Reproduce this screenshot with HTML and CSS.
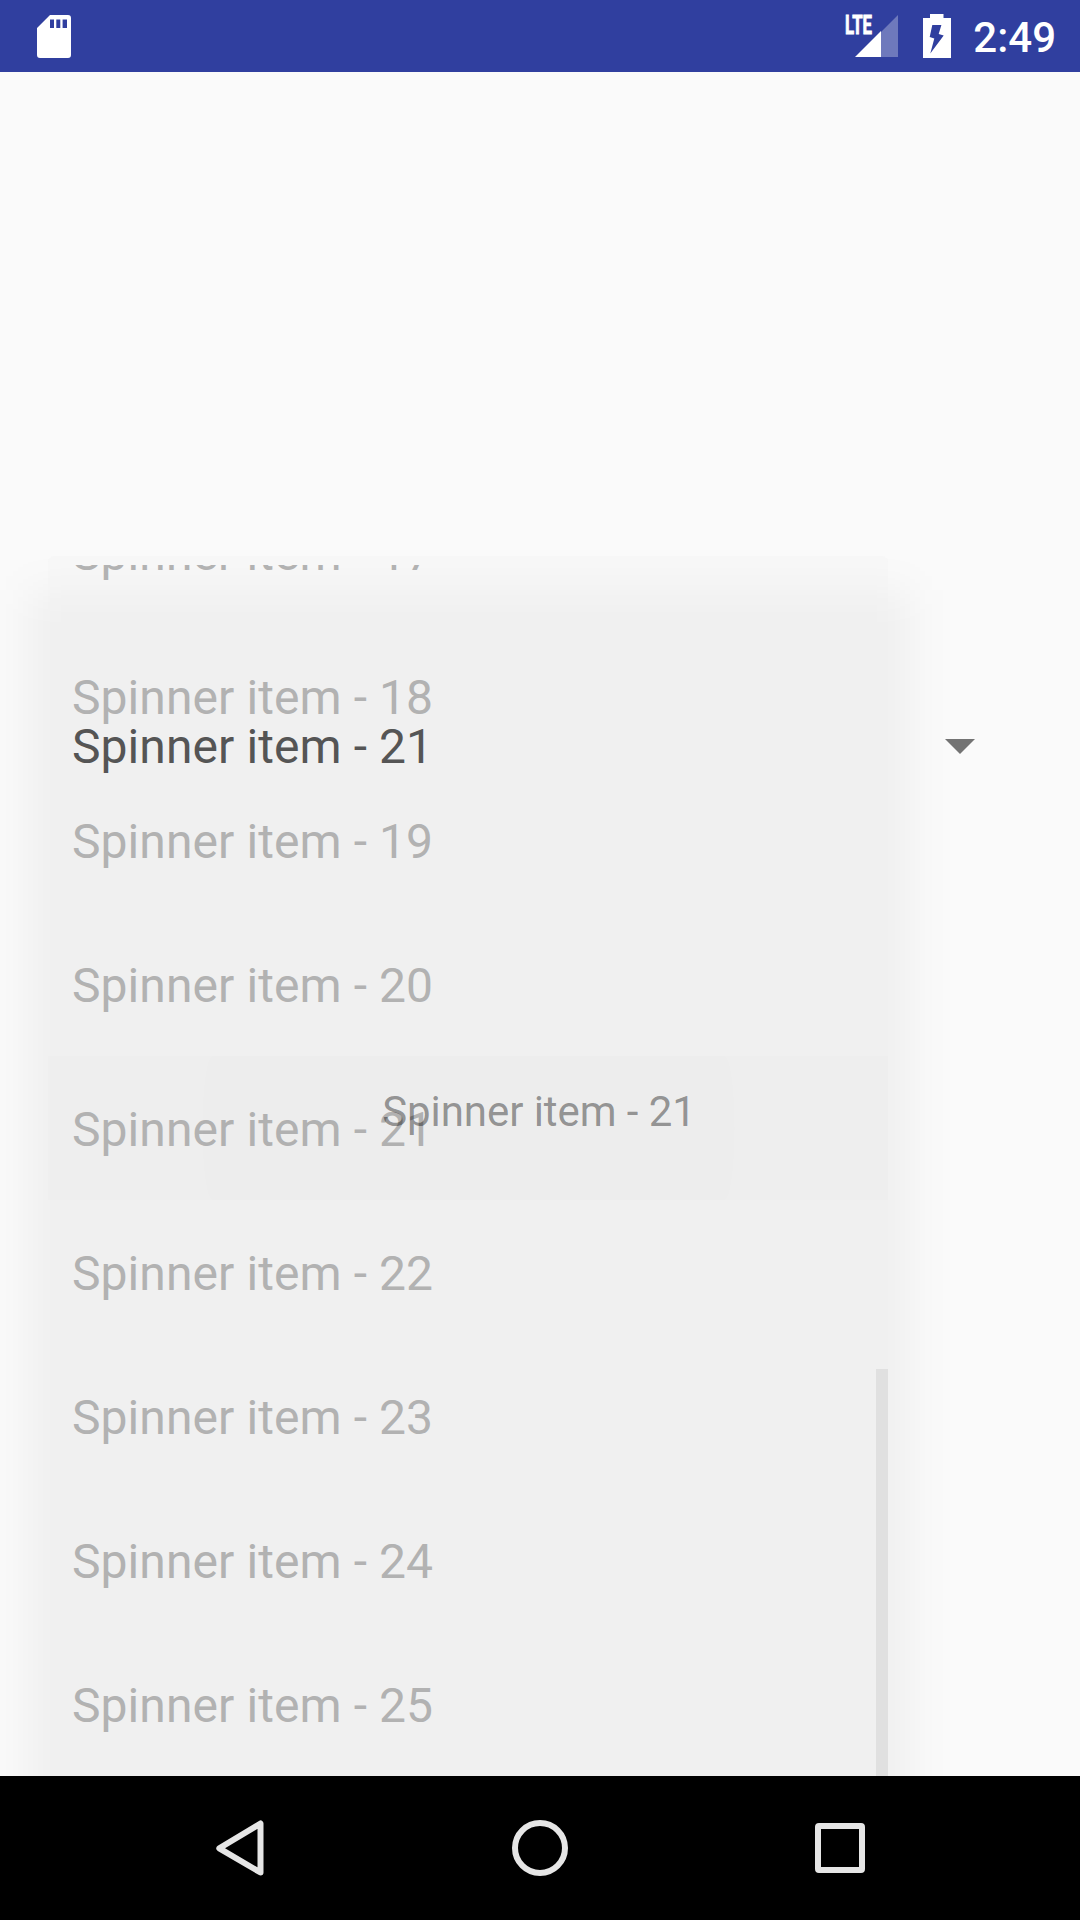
FILE: index.html
```html
<!DOCTYPE html>
<html lang="en">
<head>
<meta charset="utf-8">
<title>Spinner</title>
<link rel="stylesheet" href="styles.css">
</head>
<body>
<header class="status-bar">
  <svg class="sd-icon" width="34" height="43" viewBox="0 0 34 43"><path fill="#fff" fill-rule="evenodd" d="M13 0H31Q34 0 34 3V40Q34 43 31 43H3Q0 43 0 40V13ZM13 4.500V13H17V4.500ZM19.300 4.500V13H23.300V4.500ZM25.600 4.500V13H30V4.500Z"/></svg>
  <div class="status-right">
    <svg class="signal-icon" width="54" height="44" viewBox="0 0 54 44">
      <path fill="#fff" fill-opacity=".3" d="M36 18L53 1V43H36Z"/>
      <path fill="#fff" d="M10 43L36 17V43Z"/>
      <text class="lte" x="0" y="20" textLength="27" lengthAdjust="spacingAndGlyphs">LTE</text>
    </svg>
    <svg class="battery-icon" width="28" height="44" viewBox="0 0 28 44"><path fill="#fff" fill-rule="evenodd" d="M7 0H20.500V4H28V44H0V4H7ZM9.300 11L6.700 23L11.300 24.500L7.300 39.500L20.700 21.500L15.700 20L18.400 11Z"/></svg>
    <span class="clock">2:49</span>
  </div>
</header>
<main class="content">
  <div class="popup-shadow"></div>
  <div class="popup">
    <ul class="list">
      <li class="item">Spinner item - 17</li>
      <li class="item">Spinner item - 18</li>
      <li class="item">Spinner item - 19</li>
      <li class="item">Spinner item - 20</li>
      <li class="item active">Spinner item - 21</li>
      <li class="item">Spinner item - 22</li>
      <li class="item">Spinner item - 23</li>
      <li class="item">Spinner item - 24</li>
      <li class="item">Spinner item - 25</li>
    </ul>
    <div class="scrollbar"></div>
  </div>
  <div class="spinner">
    <span>Spinner item - 21</span>
    <svg class="caret" width="30" height="15" viewBox="0 0 30 15"><path fill="#737373" d="M0 0H30L15 15Z"/></svg>
  </div>
  <div class="toast-shape"></div>
  <div class="toast">Spinner item - 21</div>
</main>
<nav class="nav-bar">
  <svg width="60" height="60" viewBox="0 0 60 60"><path d="M9.300 30.300L50.500 5.500V54.500Z"/></svg>
  <svg width="60" height="60" viewBox="0 0 60 60"><circle cx="30" cy="30" r="25"/></svg>
  <svg width="60" height="60" viewBox="0 0 60 60"><rect x="8" y="8" width="44" height="44" rx="1"/></svg>
</nav>
</body>
</html>
```
FILE: styles.css
```css
* { box-sizing: border-box; }
body {
  margin: 0;
  width: 1080px;
  height: 1920px;
  display: flex;
  flex-direction: column;
  overflow: hidden;
  background: #fafafa;
  font-family: Roboto, sans-serif;
  font-size: 48px;
  letter-spacing: .08px;
}
svg { display: block; }
.status-bar {
  height: 72px;
  flex: none;
  display: flex;
  justify-content: space-between;
  align-items: center;
  padding: 0 24px 0 37px;
  background: #303f9f;
  color: #fff;
}
.status-right { display: flex; align-items: center; }
.signal-icon { margin-right: 24px; overflow: visible; }
.lte {
  font-size: 26px;
  font-weight: 700;
  letter-spacing: 0;
  fill: #fff;
  stroke: #fff;
  stroke-width: .9;
}
.battery-icon { margin-right: 22px; }
.clock {
  font-size: 42px;
  font-weight: 500;
  line-height: 70px;
  padding-top: 3px;
  letter-spacing: 0;
}
.content {
  position: relative;
  flex: 1;
  overflow: hidden;
}
.popup-shadow {
  position: absolute;
  left: 28px;
  top: 518px;
  width: 882px;
  height: 1400px;
  background: rgba(0, 0, 0, .044);
  filter: blur(21px);
}
.popup {
  position: absolute;
  left: 48px;
  top: 484px;
  width: 840px;
  height: 1220px;
  padding-top: 9px;
  border-radius: 6px 6px 0 0;
  background: rgba(243, 243, 243, .3);
}
.list {
  list-style: none;
  margin: 0;
  padding: 0;
  height: 1211px;
  overflow: hidden;
  display: flex;
  flex-direction: column;
}
.item {
  flex: none;
  height: 144px;
  padding: 3px 24px 0;
  line-height: 141px;
  color: #b2b2b2;
}
.item:first-child { margin-top: -85px; }
.active { background: rgba(0, 0, 0, .008); }
.scrollbar {
  position: absolute;
  right: 0;
  top: 813px;
  width: 12px;
  bottom: 0;
  background: #e0e0e0;
}
.spinner {
  position: relative;
  display: flex;
  justify-content: space-between;
  align-items: center;
  height: 144px;
  margin: 602px 105px 0 72px;
  color: #555;
}
.caret { margin-top: 1px; }
.toast-shape {
  position: absolute;
  left: 202px;
  top: 984px;
  width: 533px;
  height: 144px;
  border-radius: 10px / 72px;
  background: rgba(0, 0, 0, .004);
}
.toast {
  position: absolute;
  left: 0;
  right: 2px;
  top: 1015px;
  text-align: center;
  font-size: 42px;
  line-height: 50px;
  letter-spacing: -.06px;
  color: rgba(0, 0, 0, .4);
}
.nav-bar {
  flex: none;
  height: 144px;
  display: flex;
  justify-content: center;
  align-items: center;
  gap: 240px;
  background: #000;
}
.nav-bar svg {
  fill: none;
  stroke: #e6e6e6;
  stroke-width: 6;
  stroke-linejoin: round;
}
```
